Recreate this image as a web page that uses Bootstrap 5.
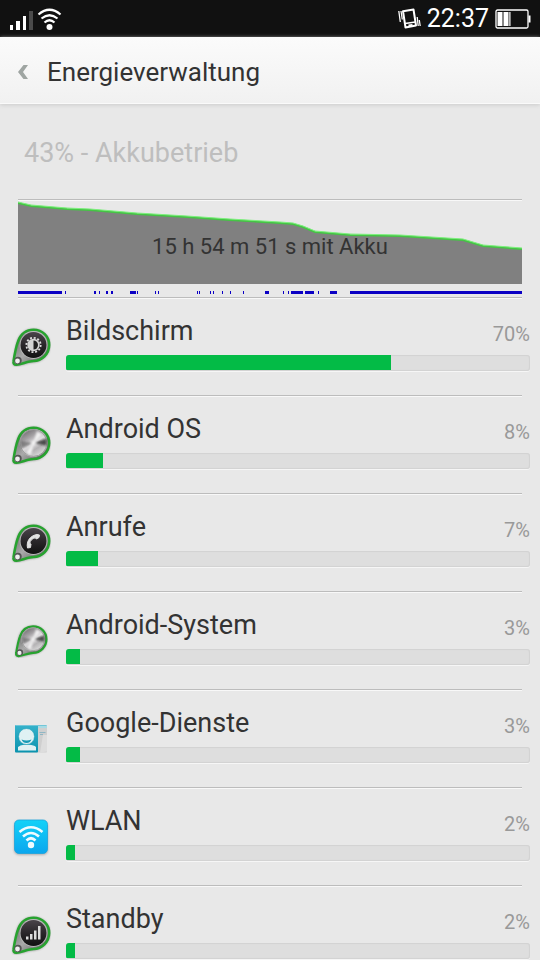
<!DOCTYPE html>
<html lang="de">
<head>
<meta charset="utf-8">
<meta name="viewport" content="width=device-width, initial-scale=1">
<title>Energieverwaltung</title>
<link href="https://cdn.jsdelivr.net/npm/bootstrap@5.3.0/dist/css/bootstrap.min.css" rel="stylesheet">
<style>
  body { font-family: Roboto, "Noto Sans", sans-serif; background: #e8e8e8; color: #333; }
  .status-bar { background: #111; color: #fff; height: 37px; padding: 0 9px 0 10px; }
  .status-right { gap: 6px; }
  .clock { font-size: 25px; line-height: 36px; padding-top: 1px; }
  .title-bar { background: linear-gradient(#fbfbfb, #f1f1f1); border-bottom: 1px solid #fafafa; box-shadow: 0 1px 4px #ccc; padding: 18px 17px 14px; }
  .title-bar h1 { font-size: 26px; line-height: 34px; font-weight: 400; }
  .back-link { width: 30px; line-height: 0; }
  .battery-state { font-size: 27px; line-height: 32px; font-weight: 400; color: #bebebe; padding: 33px 24px 30px; }
  .rule { height: 2px; border: 0; opacity: 1; margin: 0 18px; background: linear-gradient(#bcbcbc 50%, #f8f8f8 50%); }
  .history { margin: 0 18px; }
  .history svg { height: 96px; }
  .history-label { font-size: 22px; line-height: 28px; padding-top: 32px; }
  .entry { padding: 16px 10px 24px 11px; gap: 15px; }
  .entry-icon { width: 40px; height: 40px; margin-top: 8px; }
  .entry-name { font-size: 27px; line-height: 32px; font-weight: 400; }
  .entry-share { font-size: 20px; line-height: 24px; color: #999; padding-top: 7px; }
  .meter { --bs-progress-height: 16px; --bs-progress-bg: #dedede; --bs-progress-border-radius: 3px; margin-top: 8px; box-shadow: inset 0 0 1px 1px #d2d2d2, 0 1px 0 #f6f6f6; }
  .meter .progress-bar { background: #03bb46; height: 15px; }
</style>
<script src="https://cdn.jsdelivr.net/npm/bootstrap@5.3.0/dist/js/bootstrap.bundle.min.js"></script>
</head>
<body class="vh-100 overflow-hidden">

<svg width="0" height="0" class="position-absolute" aria-hidden="true">
  <defs>
    <linearGradient id="darkFace" x1="0" y1="0" x2="0" y2="1"><stop offset="0" stop-color="#4a444a"/><stop offset=".5" stop-color="#2a272a"/><stop offset="1" stop-color="#111"/></linearGradient>
    <linearGradient id="rim" x1="0" y1="0" x2="1" y2="1"><stop offset="0" stop-color="#555"/><stop offset=".5" stop-color="#aaa"/><stop offset="1" stop-color="#444"/></linearGradient>
    <linearGradient id="steel" x1=".2" y1="0" x2=".8" y2="1"><stop offset="0" stop-color="#6e6a6e"/><stop offset=".28" stop-color="#a5a2a5"/><stop offset=".5" stop-color="#e2e0e2"/><stop offset=".7" stop-color="#b4b2b4"/><stop offset="1" stop-color="#e4e4e4"/></linearGradient>
    <linearGradient id="teal" x1="0" y1="0" x2="0" y2="1"><stop offset="0" stop-color="#35b2cb"/><stop offset="1" stop-color="#0a93ae"/></linearGradient>
    <linearGradient id="sky" x1="0" y1="0" x2="0" y2="1"><stop offset="0" stop-color="#13d2f8"/><stop offset="1" stop-color="#0ba6ee"/></linearGradient>
    <filter id="soft" x="-20%" y="-20%" width="140%" height="140%"><feGaussianBlur stdDeviation="1"/></filter>
    <symbol id="drop" viewBox="0 0 40 40">
      <path d="M6 14.500C8.500 6.500 15 2 22.500 2C32 2 39 9 39 18C39 28 31 35 22 35.500C18 35.500 12 38 5.500 39C3 39.500 1.500 37 2 34.500C3 28 4.500 20 6 14.500Z" fill="#444" opacity=".55" filter="url(#soft)"/>
      <path d="M7 14.500C9.500 7 15.500 2.800 22.500 2.800C31.500 2.800 38.200 9.500 38.200 18C38.200 27 31 33.800 22.500 34C18 34 11 37 5.500 37.800C3.200 38 2 36.500 2.500 34.200C3.500 28 5 20 7 14.500Z" fill="url(#rim)" stroke="#27a32f" stroke-width="2.500"/>
      <circle cx="22.500" cy="18" r="13.900" fill="#bbb"/>
      <circle cx="7" cy="33.500" r="3.700" fill="#555"/><circle cx="6.500" cy="34" r="2.400" fill="#eee"/>
    </symbol>
    <symbol id="steelDrop" viewBox="0 0 40 40">
      <use href="#drop"/>
      <circle cx="22.500" cy="18" r="13.400" fill="url(#steel)" stroke="#999"/>
      <g filter="url(#soft)">
        <path d="M22.500 18L35.500 13.500V20.500Z" fill="#222" opacity=".75"/>
        <path d="M22.500 18L9.800 16V24Z" fill="#444" opacity=".5"/>
        <path d="M22.500 18L26 6L31 9.500ZM22.500 18L15 28L20 30.500Z" fill="#fff" opacity=".8"/>
        <circle cx="22.500" cy="18" r="2" fill="#fff" opacity=".8"/>
      </g>
    </symbol>
    <symbol id="darkDrop" viewBox="0 0 40 40">
      <use href="#drop"/>
      <circle cx="22.500" cy="18" r="13" fill="url(#darkFace)"/>
    </symbol>
  </defs>
</svg>

<div class="d-flex flex-column h-100">
  <div class="status-bar d-flex align-items-center justify-content-between flex-shrink-0">
    <svg width="52" height="24" viewBox="0 0 52 24" role="img" aria-label="Mobilfunk und WLAN">
      <path d="M0 18h3v5H0zM6 14h4v9H6zM13 9h3v14h-3z" fill="#fff"/>
      <path d="M19 4h4v19h-4z" fill="#4b4b4b"/>
      <g fill="none" stroke="#fff" stroke-width="2.200"><path d="M28.500 7.500Q39.500-2 50.500 7.500"/><path d="M31.500 11.500Q39.500 5 47.500 11.500"/><path d="M34.500 15.500Q39.500 11 44.500 15.500"/></g>
      <circle cx="39.500" cy="20" r="3" fill="#fff"/>
    </svg>
    <div class="status-right d-flex align-items-center">
      <svg width="23" height="22" viewBox="0 0 23 22" role="img" aria-label="Vibration">
        <g fill="none" stroke="#fff">
          <path d="M5 3.200L15.500 1.500L18 17.500L7.500 19.500Z" stroke-width="2" stroke-linejoin="round"/>
          <path d="M7 15.500L17.500 14" stroke-width="1.500"/><path d="M10.500 17.500L14.500 17" stroke-width="2"/>
          <path d="M.800 3L2.300 14M3 3L4.300 11.500M19.200 9L20.200 18M21.300 12L22.200 18" stroke-width="1.300"/>
        </g>
      </svg>
      <time class="clock">22:37</time>
      <svg width="36" height="20" viewBox="0 0 36 20" role="img" aria-label="Akku 43%">
        <rect x="1" y="1" width="32" height="18" rx="1.500" fill="none" stroke="#fff" stroke-width="1.300"/>
        <path d="M2.500 3h5v14h-5zM8.500 3h5v14h-5zM14.300 3h1.200v14h-1.200zM33.500 6.500h2v7h-2z" fill="#fff"/>
      </svg>
    </div>
  </div>

  <header class="title-bar d-flex align-items-center flex-shrink-0">
    <a href="#" class="back-link" aria-label="Zurück">
      <svg width="11" height="14" viewBox="0 0 11 14"><path d="M6.500 0H11L6 7L11 14H6.500L1 7Z" fill="#9fa5a2"/></svg>
    </a>
    <h1 class="m-0">Energieverwaltung</h1>
  </header>

  <main class="flex-grow-1 overflow-hidden">
    <h2 class="battery-state m-0">43% - Akkubetrieb</h2>
    <hr class="rule">
    <div class="history position-relative">
      <svg class="d-block w-100" viewBox="0 0 504 96" preserveAspectRatio="none" role="img" aria-label="Akkuverlauf">
        <path d="M0 2L13 5L49 8L72 9L119 13L169 16L212 19L262 22L275 23L285 26L297 31L332 34L382 35L445 39L465 45L504 48V83H0Z" fill="#808080"/>
        <path d="M0 2L13 5L49 8L72 9L119 13L169 16L212 19L262 22L275 23L285 26L297 31L332 34L382 35L445 39L465 45L504 48" fill="none" stroke="#45c545" stroke-width="2"/>
        <path d="M0 1L13 4L49 7L72 8L119 12L169 15L212 18L262 21L275 22L285 25L297 30L332 33L382 34L445 38L465 44L504 47" fill="none" stroke="#7df07d" stroke-width="1"/>
        <path d="M0 90h44v3H0zM47 90h1v3h-1zM76 90h2v3h-2zM81 90h1v3h-1zM88 90h2v3h-2zM93 90h2v3h-2zM112 90h6v3h-6zM119 90h1v3h-1zM137 90h1v3h-1zM140 90h1v3h-1zM179 90h1v3h-1zM181 90h1v3h-1zM192 90h1v3h-1zM195 90h1v3h-1zM204 90h1v3h-1zM212 90h1v3h-1zM225 90h1v3h-1zM247 90h4v3h-4zM265 90h1v3h-1zM270 90h1v3h-1zM273 90h12v3h-12zM287 90h9v3h-9zM300 90h1v3h-1zM312 90h7v3h-7zM332 90h172v3H332z" fill="#0b00c4"/>
      </svg>
      <div class="history-label position-absolute top-0 start-0 w-100 text-center">15 h 54 m 51 s mit Akku</div>
    </div>
    <hr class="rule">

    <ul class="list-unstyled m-0">
      <li>
        <div class="entry d-flex align-items-center">
          <svg class="entry-icon flex-shrink-0" viewBox="0 0 40 40" aria-hidden="true"><use href="#darkDrop"/>
            <circle cx="22.500" cy="18" r="7.200" fill="none" stroke="#ddd" stroke-width="1.800" stroke-dasharray="2 1.770"/>
            <circle cx="22.500" cy="18" r="6.200" fill="#d4d4d4"/><path d="M22.500 13.500a4.500 4.500 0 0 1 0 9z" fill="#222"/></svg>
          <div class="flex-grow-1">
            <div class="d-flex justify-content-between"><h3 class="entry-name m-0" id="n1">Bildschirm</h3><span class="entry-share">70%</span></div>
            <div class="progress meter" role="progressbar" aria-labelledby="n1" aria-valuenow="70" aria-valuemin="0" aria-valuemax="100"><div class="progress-bar" style="width:70%"></div></div>
          </div>
        </div>
        <hr class="rule">
      </li>
      <li>
        <div class="entry d-flex align-items-center">
          <svg class="entry-icon flex-shrink-0" viewBox="0 0 40 40" aria-hidden="true"><use href="#steelDrop"/></svg>
          <div class="flex-grow-1">
            <div class="d-flex justify-content-between"><h3 class="entry-name m-0" id="n2">Android OS</h3><span class="entry-share">8%</span></div>
            <div class="progress meter" role="progressbar" aria-labelledby="n2" aria-valuenow="8" aria-valuemin="0" aria-valuemax="100"><div class="progress-bar" style="width:8%"></div></div>
          </div>
        </div>
        <hr class="rule">
      </li>
      <li>
        <div class="entry d-flex align-items-center">
          <svg class="entry-icon flex-shrink-0" viewBox="0 0 40 40" aria-hidden="true"><use href="#darkDrop"/>
            <path d="M26 11.500C19.500 12.500 15 18 16.500 25L19.500 24.500L20 21L18.800 20.500C18.800 18 21.500 15 24.300 14.800L25.300 16L28 14.500L28.500 12Z" fill="#e2e2e2" stroke="#e2e2e2" stroke-linejoin="round"/></svg>
          <div class="flex-grow-1">
            <div class="d-flex justify-content-between"><h3 class="entry-name m-0" id="n3">Anrufe</h3><span class="entry-share">7%</span></div>
            <div class="progress meter" role="progressbar" aria-labelledby="n3" aria-valuenow="7" aria-valuemin="0" aria-valuemax="100"><div class="progress-bar" style="width:7%"></div></div>
          </div>
        </div>
        <hr class="rule">
      </li>
      <li>
        <div class="entry d-flex align-items-center">
          <svg class="entry-icon flex-shrink-0" viewBox="0 0 40 40" aria-hidden="true"><use href="#steelDrop" x="3" y="3" width="34" height="34"/></svg>
          <div class="flex-grow-1">
            <div class="d-flex justify-content-between"><h3 class="entry-name m-0" id="n4">Android-System</h3><span class="entry-share">3%</span></div>
            <div class="progress meter" role="progressbar" aria-labelledby="n4" aria-valuenow="3" aria-valuemin="0" aria-valuemax="100"><div class="progress-bar" style="width:3%"></div></div>
          </div>
        </div>
        <hr class="rule">
      </li>
      <li>
        <div class="entry d-flex align-items-center">
          <svg class="entry-icon flex-shrink-0" viewBox="0 0 40 40" aria-hidden="true">
            <rect x="4" y="6" width="32" height="27.500" rx="1" fill="#cfcfcf"/>
            <path d="M27 6h8a1 1 0 0 1 1 1v2h-9z" fill="#a9dbe4"/>
            <path d="M28.500 13.500h6M29 15.500h3" stroke="#8fb6c4" stroke-width="1.200"/>
            <path d="M32 16h4v16.500l-7 1z" fill="#ddd"/>
            <rect x="4" y="6" width="23" height="27.500" rx="1" fill="url(#teal)"/>
            <path d="M4.500 6.500h31" stroke="#72c6d8"/>
            <path d="M7 31.500V28Q9 26 13 25.800L18 25.800Q23 26 25 28V31.500Z" fill="#dff1f3"/>
            <circle cx="15.500" cy="17.500" r="8" fill="#dff1f3" stroke="#169bb6" stroke-width=".6"/>
            <path d="M10.500 20.500Q15.500 22.500 20.500 20.500Q19 24 15.500 24T10.500 20.500Z" fill="#169bb6"/>
          </svg>
          <div class="flex-grow-1">
            <div class="d-flex justify-content-between"><h3 class="entry-name m-0" id="n5">Google-Dienste</h3><span class="entry-share">3%</span></div>
            <div class="progress meter" role="progressbar" aria-labelledby="n5" aria-valuenow="3" aria-valuemin="0" aria-valuemax="100"><div class="progress-bar" style="width:3%"></div></div>
          </div>
        </div>
        <hr class="rule">
      </li>
      <li>
        <div class="entry d-flex align-items-center">
          <svg class="entry-icon flex-shrink-0" viewBox="0 0 40 40" aria-hidden="true">
            <rect x="3" y="4" width="34" height="34" rx="5" fill="#777" opacity=".5" filter="url(#soft)"/>
            <rect x="3.500" y="3" width="33" height="33.500" rx="4.500" fill="url(#sky)" stroke="#1aa5dd" stroke-width=".8"/>
            <g fill="none" stroke="#effbff" stroke-width="2.600"><path d="M8.500 15Q20 5.500 31.500 15"/><path d="M12 19.500Q20 12.500 28 19.500"/><path d="M15.500 23.500Q20 19 24.500 23.500"/></g>
            <circle cx="20" cy="28" r="3.200" fill="#effbff"/>
          </svg>
          <div class="flex-grow-1">
            <div class="d-flex justify-content-between"><h3 class="entry-name m-0" id="n6">WLAN</h3><span class="entry-share">2%</span></div>
            <div class="progress meter" role="progressbar" aria-labelledby="n6" aria-valuenow="2" aria-valuemin="0" aria-valuemax="100"><div class="progress-bar" style="width:2%"></div></div>
          </div>
        </div>
        <hr class="rule">
      </li>
      <li>
        <div class="entry d-flex align-items-center">
          <svg class="entry-icon flex-shrink-0" viewBox="0 0 40 40" aria-hidden="true"><use href="#darkDrop"/>
            <path d="M15 21.500h2.500v3H15zM19 19h2.500v5.500H19zM23 15.500h2.500v9H23zM27 11h2.500v13.500H27z" fill="#ddd"/></svg>
          <div class="flex-grow-1">
            <div class="d-flex justify-content-between"><h3 class="entry-name m-0" id="n7">Standby</h3><span class="entry-share">2%</span></div>
            <div class="progress meter" role="progressbar" aria-labelledby="n7" aria-valuenow="2" aria-valuemin="0" aria-valuemax="100"><div class="progress-bar" style="width:2%"></div></div>
          </div>
        </div>
      </li>
    </ul>
  </main>
</div>
</body>
</html>
